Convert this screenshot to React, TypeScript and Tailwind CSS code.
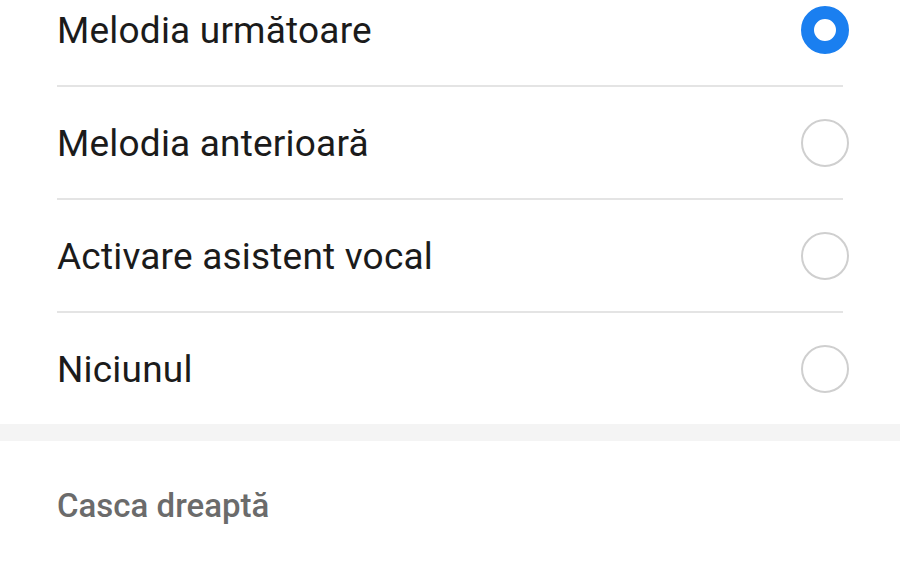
const options = [
  "Melodia următoare",
  "Melodia anterioară",
  "Activare asistent vocal",
  "Niciunul",
];

function Radio({ checked }: { checked: boolean }) {
  if (checked) {
    return <div className="w-12 h-12 rounded-full border-[13px] border-[#1a7ff0] bg-white shrink-0" />;
  }
  return <div className="w-12 h-12 rounded-full border-2 border-[#cfcfcf] bg-white shrink-0" />;
}

export default function App() {
  const selected = 0;

  return (
    <div className="w-[900px] h-[570px] overflow-hidden bg-white font-['Roboto',sans-serif]">
      <div className="-mt-[26px] pl-[57px] pr-[51px]">
        {options.map((label, i) => (
          <div key={i}>
            <div className="h-[111px] flex items-center justify-between">
              <span className="text-[37px] tracking-[0.2px] leading-none text-[#1b1b1b] pt-[2px]">{label}</span>
              <Radio checked={i === selected} />
            </div>
            {i < options.length - 1 && <div className="h-[2px] bg-[#e4e4e4] mr-[6px]" />}
          </div>
        ))}
      </div>
      <div className="h-[17px] bg-[#f4f4f4]" />
      <div className="pl-[57px] pt-[40px]">
        <span className="text-[33px] font-medium text-[#6b6b6b]">Casca dreaptă</span>
      </div>
    </div>
  );
}
